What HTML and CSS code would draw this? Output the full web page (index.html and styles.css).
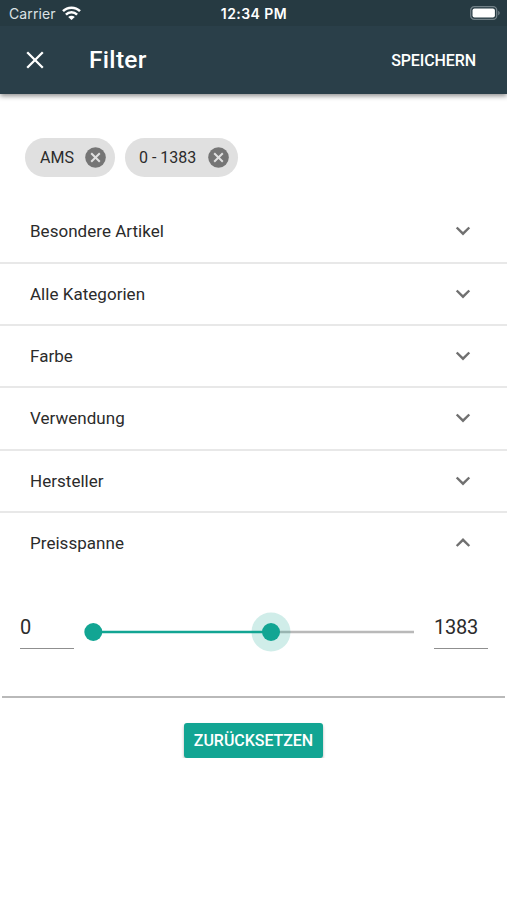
FILE: index.html
```html
<!DOCTYPE html>
<html lang="de">
<head>
<meta charset="utf-8">
<meta name="viewport" content="width=device-width, initial-scale=1">
<title>Filter</title>
<link rel="stylesheet" href="styles.css">
</head>
<body>
<header class="header">
  <div class="status">
    <div class="carrier"><span>Carrier</span>
      <svg class="wifi" viewBox="0 0 19 14"><path d="M1 5.200C5.600.5 13.400.5 18 5.200M3.900 8.600c3.100-3.100 8.100-3.100 11.200 0" fill="none" stroke="currentColor" stroke-width="2.500"/><path d="M9.500 14 6.200 10.900c1.800-1.700 4.800-1.700 6.600 0z" fill="currentColor"/></svg>
    </div>
    <span class="time">12:34 PM</span>
    <svg class="battery" viewBox="0 0 30 14"><rect x=".7" y=".7" width="26" height="12.600" rx="3.600" fill="none" stroke="#728188" stroke-width="1.300"/><rect x="2.500" y="2.500" width="22.400" height="9" rx="2" fill="#fff"/><path d="M28.200 4.700c2 .8 2 3.800 0 4.600z" fill="#728188"/></svg>
  </div>
  <div class="toolbar">
    <svg class="close" viewBox="0 0 18 18"><path d="m1.200 1.200 15.600 15.600m0-15.600L1.200 16.800" fill="none" stroke="currentColor" stroke-width="2.300"/></svg>
    <h1 class="title">Filter</h1>
    <button class="save">SPEICHERN</button>
  </div>
</header>
<main>
  <div class="panel">
    <div class="chips">
      <div class="chip"><span class="ams">AMS</span><svg class="remove" viewBox="0 0 21 21"><circle cx="10.500" cy="10.500" r="10.300" fill="#757575"/><path d="m6.200 6.200 8.600 8.600m0-8.600-8.600 8.600" stroke="#e0e0e0" stroke-width="2"/></svg></div>
      <div class="chip"><span class="range">0 - 1383</span><svg class="remove" viewBox="0 0 21 21"><circle cx="10.500" cy="10.500" r="10.300" fill="#757575"/><path d="m6.200 6.200 8.600 8.600m0-8.600-8.600 8.600" stroke="#e0e0e0" stroke-width="2"/></svg></div>
    </div>
    <div class="row"><span>Besondere Artikel</span><svg class="chevron" viewBox="0 0 16 10"><path d="m1.700 1.500 6.300 6.200 6.300-6.200"/></svg></div>
    <div class="row"><span>Alle Kategorien</span><svg class="chevron" viewBox="0 0 16 10"><path d="m1.700 1.500 6.300 6.200 6.300-6.200"/></svg></div>
    <div class="row"><span>Farbe</span><svg class="chevron" viewBox="0 0 16 10"><path d="m1.700 1.500 6.300 6.200 6.300-6.200"/></svg></div>
    <div class="row"><span>Verwendung</span><svg class="chevron" viewBox="0 0 16 10"><path d="m1.700 1.500 6.300 6.200 6.300-6.200"/></svg></div>
    <div class="row"><span>Hersteller</span><svg class="chevron" viewBox="0 0 16 10"><path d="m1.700 1.500 6.300 6.200 6.300-6.200"/></svg></div>
    <div class="row open"><span>Preisspanne</span><svg class="chevron" viewBox="0 0 16 10"><path d="m1.700 8 6.300-6.200 6.300 6.200"/></svg></div>
    <div class="price">
      <div class="field">0</div>
      <svg class="slider" viewBox="0 0 340 40"><path d="M187 20h143" stroke="#b9b9b9" stroke-width="2.500"/><path d="M9 20h178" stroke="#12a593" stroke-width="2.500"/><circle cx="187" cy="20" r="19.500" fill="#12a593" fill-opacity=".2"/><circle cx="9.300" cy="20" r="9" fill="#12a593"/><circle cx="187" cy="20" r="9" fill="#12a593"/></svg>
      <div class="field">1383</div>
    </div>
  </div>
  <button class="reset">ZURÜCKSETZEN</button>
</main>
</body>
</html>
```
FILE: styles.css
```css
* { box-sizing: border-box; }
body { margin: 0; background: #fff; color: #2b2b2b; font-family: Roboto, sans-serif; }
button { border: 0; padding: 0; background: none; font: inherit; color: inherit; }
svg { display: block; flex: none; }
main { display: flex; flex-direction: column; align-items: center; }

.header { height: 94px; background: #2a3f49; color: #fff; box-shadow: 0 2px 5px rgba(0,0,0,.45); position: relative; }
.status { height: 26px; padding: 0 7px 0 9px; display: grid; grid-template-columns: 1fr auto 1fr; align-items: center; background: #263a42; font-family: Inter, sans-serif; }
.carrier { display: flex; align-items: center; gap: 6px; font-size: 14px; letter-spacing: .1px; color: #dce2e5; }
.wifi { width: 19px; height: 14px; color: #fff; }
.time { font-size: 14px; font-weight: 600; letter-spacing: .45px; padding-top: 1px; margin-right: 1px; }
.battery { width: 30px; height: 14px; justify-self: end; }
.toolbar { height: 68px; display: flex; align-items: center; padding: 0 31px 0 26px; }
.close { width: 18px; height: 18px; }
.title { margin: 0 auto 0 45px; padding-bottom: 2px; font-size: 24.500px; font-weight: 500; letter-spacing: .3px; }
.save { font-size: 16px; font-weight: 500; letter-spacing: -.1px; }

.panel { width: 503px; height: 604px; border-bottom: 2px solid #b9b9b9; }
.chips { display: flex; gap: 10px; padding: 44px 23px 24.600px; }
.chip { height: 39px; border-radius: 20px; background: #e0e0e0; display: flex; align-items: center; justify-content: space-between; padding: 0 9px 0 15px; font-size: 16px; }
.chip + .chip { padding-left: 14px; }
.ams { width: 45px; }
.range { width: 69px; }
.remove { width: 21px; height: 21px; }
.row { height: 62.300px; margin: 0 -2px; padding: 0 36px .6px 30px; display: flex; align-items: center; justify-content: space-between; font-size: 17px; letter-spacing: .03px; border-bottom: 2px solid #e8e8e8; }
.row.open { border-bottom-color: transparent; }
.chevron { width: 16px; height: 10px; fill: none; stroke: #707070; stroke-width: 2.400; }
.price { padding: 32.400px 17px 0 18px; display: flex; align-items: flex-start; justify-content: space-between; }
.field { width: 54px; height: 41px; border-bottom: 1.500px solid #8f8f8f; font-size: 20px; letter-spacing: -.2px; line-height: 39px; }
.slider { width: 340px; height: 40px; margin: 4.500px 0 0; }
.reset { width: 139px; height: 35px; margin-top: 25px; border-radius: 3px; background: #12a593; color: #fff; font-size: 16px; font-weight: 500; letter-spacing: -.05px; box-shadow: 0 2px 3px rgba(0,0,0,.3); }
```
